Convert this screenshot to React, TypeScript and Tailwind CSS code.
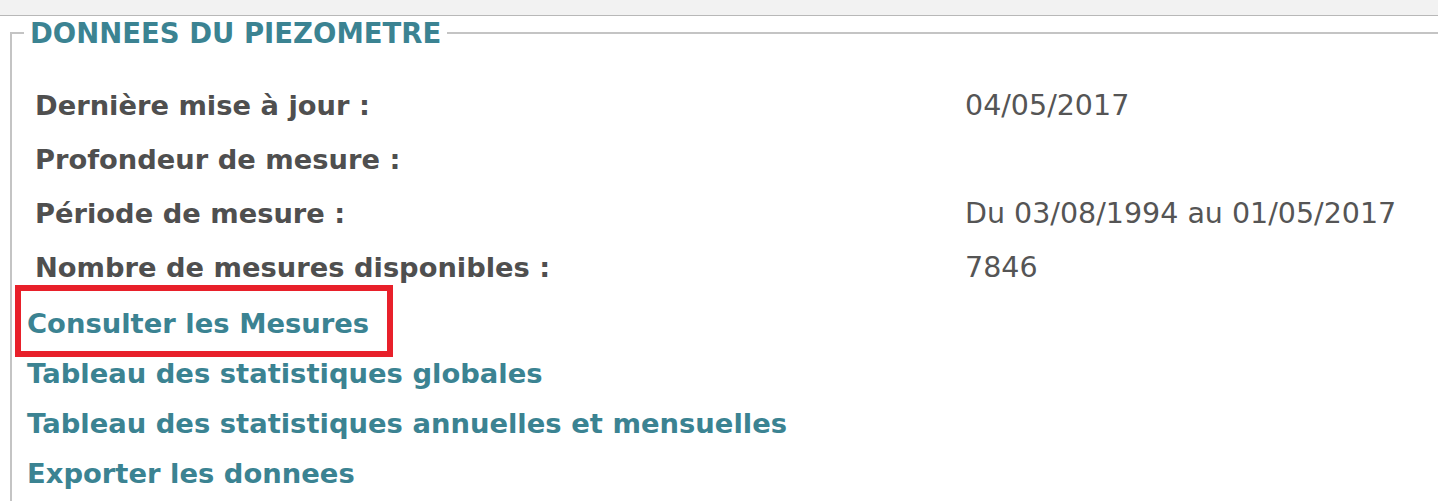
export default function App() {
  const rows = [
    { label: 'Dernière mise à jour :', value: '04/05/2017' },
    { label: 'Profondeur de mesure :', value: '' },
    { label: 'Période de mesure :', value: 'Du 03/08/1994 au 01/05/2017' },
    { label: 'Nombre de mesures disponibles :', value: '7846' },
  ]
  const links = [
    'Consulter les Mesures',
    'Tableau des statistiques globales',
    'Tableau des statistiques annuelles et mensuelles',
    'Exporter les donnees',
  ]

  return (
    <div className="w-[1438px] h-[501px] overflow-hidden bg-white font-['DejaVu_Sans',sans-serif]">
      <div className="h-[16px] bg-[#f2f2f2] border-b border-[#b8b8b8]" />

      <fieldset className="mt-[3px] ml-[10px] w-[1460px] border-2 border-[#c4c4c4] pl-[12px] pb-[40px]">
        <legend className="px-[6px] text-[27.5px] leading-[28px] font-bold text-[#3b8392]">
          DONNEES DU PIEZOMETRE
        </legend>

        {/* Infos */}
        <div className="mt-[32px]">
          {rows.map((r) => (
            <div key={r.label} className="grid grid-cols-[941px_1fr] h-[54px] items-center">
              <div className="pl-[11px] text-[27.3px] font-bold text-[#4f4f4f]">{r.label}</div>
              <div className="text-[28.5px] text-[#555]">{r.value}</div>
            </div>
          ))}
        </div>

        {/* Liens */}
        <div className="mt-[4px] flex flex-col">
          {links.map((l, i) => (
            <a
              key={l}
              href="#"
              className={`ml-[3px] h-[50px] flex items-center text-[27.4px] font-bold text-[#3b8392] ${
                i === 0 ? 'relative' : ''
              }`}
            >
              {l}
              {i === 0 && (
                <span className="absolute left-[-12px] top-[-14px] w-[378px] h-[72px] border-[6px] border-[#e8202a]" />
              )}
            </a>
          ))}
        </div>
      </fieldset>
    </div>
  )
}
